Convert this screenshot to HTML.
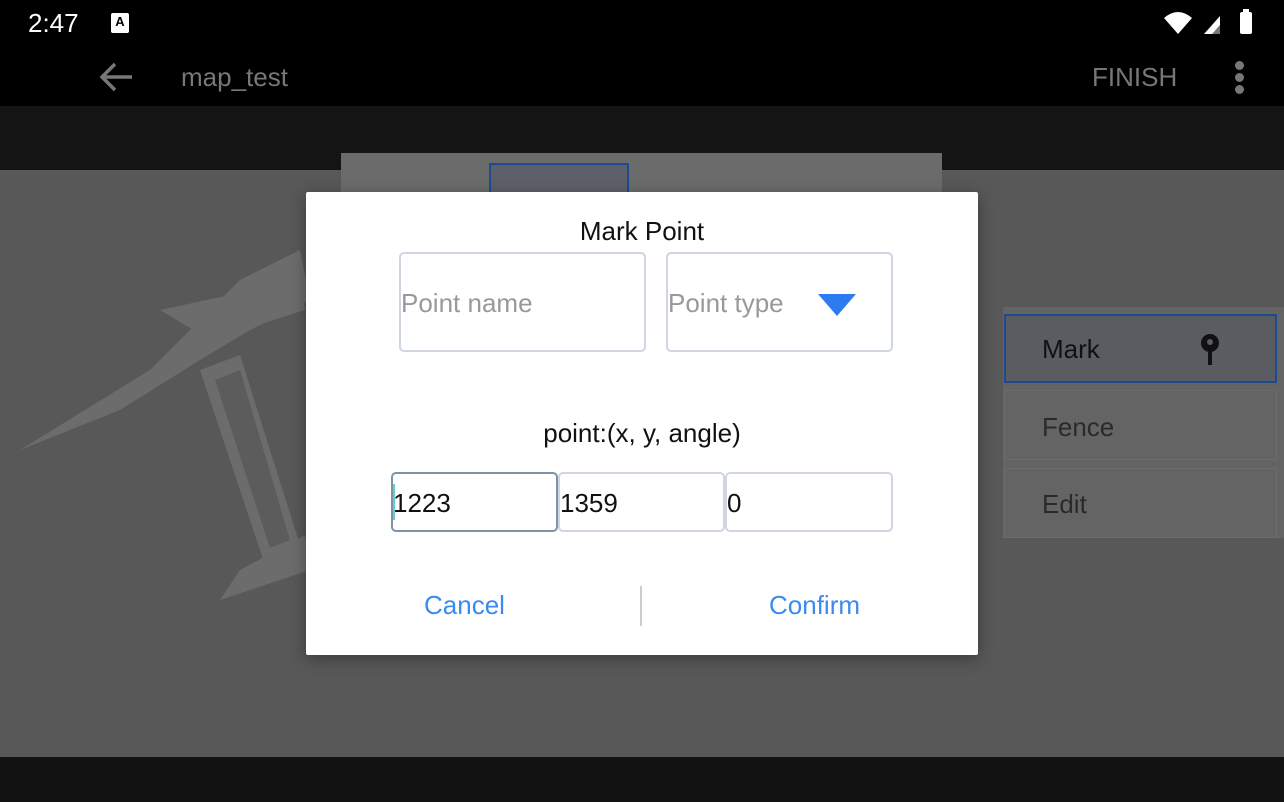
<!DOCTYPE html>
<html><head><meta charset="utf-8"><style>
*{margin:0;padding:0;box-sizing:border-box}
body{width:1284px;height:802px;position:relative;overflow:hidden;background:#585858;font-family:"Liberation Sans",sans-serif}
.abs{position:absolute}
.inp{position:absolute;border:2px solid #cfd6e0;border-radius:5px;background:#fff;font-size:26px;color:#111}
</style></head><body>
<div class="abs" style="left:0;top:0;width:1284px;height:106px;background:#000"></div>
<div class="abs" style="left:28px;top:8px;color:#fff;font-size:26px">2:47</div>
<div class="abs" style="left:111px;top:13px;width:18px;height:20px;background:#fff;border-radius:2px;font-size:13px;font-weight:bold;text-align:center;line-height:18px">A</div>
<svg class="abs" style="left:1160px;top:8px" width="100" height="30" viewBox="0 0 100 30">
<path d="M4 10 Q18 -2 32 10 L18 26 Z" fill="#fff"/>
<path d="M44 26 L60 8 L60 26 Z" fill="#fff"/><path d="M52 26 L60 17 L60 26Z" fill="#777"/>
<rect x="80" y="4" width="12" height="22" rx="2" fill="#fff"/><rect x="83" y="1" width="6" height="4" fill="#fff"/>
</svg>
<svg class="abs" style="left:98px;top:60px" width="38" height="34" viewBox="0 0 38 34"><path d="M34 17 H5 M17 4 L4 17 L17 30" stroke="#777" stroke-width="3.5" fill="none"/></svg>
<div class="abs" style="left:181px;top:62px;color:#777;font-size:26px">map_test</div>
<div class="abs" style="left:1092px;top:62px;color:#777;font-size:26px">FINISH</div>
<div class="abs" style="left:1235px;top:61px;width:9px;height:9px;border-radius:50%;background:#777"></div>
<div class="abs" style="left:1235px;top:73px;width:9px;height:9px;border-radius:50%;background:#777"></div>
<div class="abs" style="left:1235px;top:85px;width:9px;height:9px;border-radius:50%;background:#777"></div>
<div class="abs" style="left:0;top:106px;width:1284px;height:64px;background:#141414"></div>
<div class="abs" style="left:0;top:757px;width:1284px;height:45px;background:#121212"></div>
<svg class="abs" style="left:0;top:170px" width="1284" height="587">
<g fill="#6c6c6c">
<polygon points="20,280 150,200 240,110 300,80 310,130 250,160 200,190 120,240"/>
<polygon points="160,140 300,110 305,140 210,170"/>
<polygon points="200,200 240,185 300,375 265,395"/>
<polygon points="240,400 305,365 310,400 220,430"/>
</g>
<polygon points="215,210 240,200 290,370 270,378" fill="#5c5c5c"/>
</svg>
<div class="abs" style="left:341px;top:153px;width:601px;height:50px;background:#6b6b6b"></div>
<div class="abs" style="left:489px;top:163px;width:140px;height:40px;border:2px solid #1d4a91;background:#5d6068"></div>
<div class="abs" style="left:1003px;top:307px;width:281px;height:231px;background:#646464"></div>
<div class="abs" style="left:1004px;top:314px;width:273px;height:69px;border:2px solid #1d4a91;background:#5a5c62"></div>
<div class="abs" style="left:1042px;top:334px;font-size:26px;color:#111">Mark</div>
<svg class="abs" style="left:1198px;top:333px" width="24" height="34" viewBox="0 0 24 34"><circle cx="12" cy="10" r="9" fill="#111"/><circle cx="12" cy="9" r="3" fill="#5a5c62"/><rect x="10" y="15" width="4" height="17" fill="#111"/></svg>
<div class="abs" style="left:1004px;top:390px;width:273px;height:70px;border:1px solid #6c6c6c"></div>
<div class="abs" style="left:1042px;top:412px;font-size:26px;color:#2a2a2a">Fence</div>
<div class="abs" style="left:1004px;top:468px;width:273px;height:70px;border:1px solid #6c6c6c"></div>
<div class="abs" style="left:1042px;top:489px;font-size:26px;color:#2a2a2a">Edit</div>

<div class="abs" style="left:306px;top:192px;width:672px;height:463px;background:#fff;border-radius:2px;box-shadow:0 4px 16px rgba(0,0,0,.35)"></div>
<div class="abs" style="left:306px;top:216px;width:672px;text-align:center;font-size:26px;color:#111">Mark Point</div>
<div class="inp" style="left:399px;top:252px;width:247px;height:100px"><span style="position:absolute;left:0;top:34px;color:#999">Point name</span></div>
<div class="inp" style="left:666px;top:252px;width:227px;height:100px"><span style="position:absolute;left:0;top:34px;color:#999">Point type</span>
<svg style="position:absolute;left:150px;top:40px" width="38" height="24"><polygon points="0,0 38,0 19,22" fill="#2d7bf0"/></svg></div>
<div class="abs" style="left:306px;top:418px;width:672px;text-align:center;font-size:26px;color:#111">point:(x, y, angle)</div>
<div class="inp" style="left:391px;top:472px;width:167px;height:60px;border-color:#7f93a6"><span style="position:absolute;left:0;top:14px">1223</span><span style="position:absolute;left:0;top:10px;width:2px;height:36px;background:#6cc"></span></div>
<div class="inp" style="left:558px;top:472px;width:167px;height:60px"><span style="position:absolute;left:0;top:14px">1359</span></div>
<div class="inp" style="left:725px;top:472px;width:168px;height:60px"><span style="position:absolute;left:0;top:14px">0</span></div>
<div class="abs" style="left:424px;top:590px;font-size:26px;color:#3a8af2">Cancel</div>
<div class="abs" style="left:640px;top:586px;width:2px;height:40px;background:#ccc"></div>
<div class="abs" style="left:769px;top:590px;font-size:26px;color:#3a8af2">Confirm</div>
</body></html>
